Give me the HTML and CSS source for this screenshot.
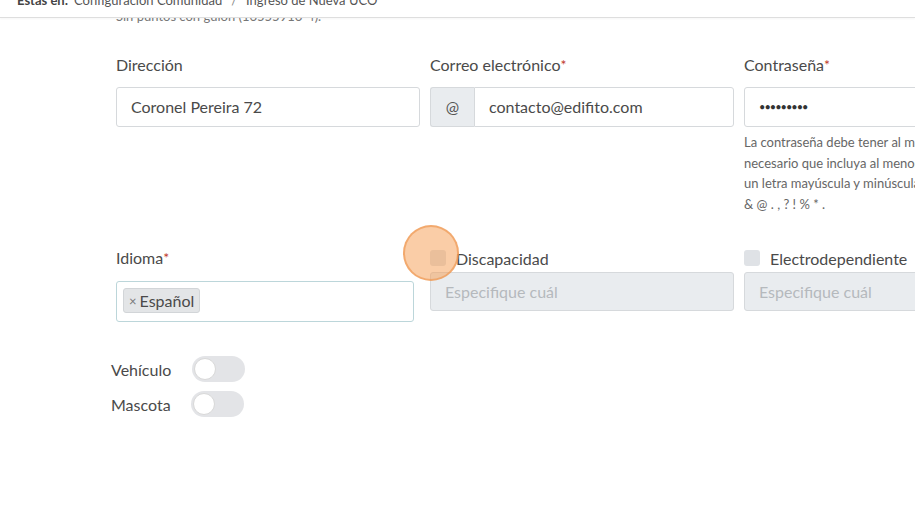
FILE: index.html
```html
<!DOCTYPE html>
<html lang="es">
<head>
  <meta charset="UTF-8" />
  <meta name="viewport" content="width=device-width, initial-scale=1.0" />
  <title>Ingreso de Nueva UCO</title>
  <link rel="stylesheet" href="styles.css">
</head>
<body>
  <div class="topbar">
    <span class="crumb-title">Estas en:</span>
    <span class="crumb">Configuración Comunidad</span>
    <span class="crumb-sep">/</span>
    <span class="crumb">Ingreso de Nueva UCO</span>
  </div>

  <div class="content">
    <div class="prev-help">Sin puntos con guión (16555916-4).</div>

    <!-- fila 1 -->
    <div class="form-row">
      <div class="form-col">
        <label class="form-label">Dirección</label>
        <div class="form-control">Coronel Pereira 72</div>
      </div>
      <div class="form-col">
        <label class="form-label">Correo electrónico<span class="req">*</span></label>
        <div class="input-group">
          <span class="input-prepend">@</span>
          <div class="form-control joined">contacto@edifito.com</div>
        </div>
      </div>
      <div class="form-col">
        <label class="form-label">Contraseña<span class="req">*</span></label>
        <div class="form-control pass">•••••••••</div>
        <p class="help">La contraseña debe tener al mínimo 8 caracteres, es<br>necesario que incluya al menos un número, un símbolo,<br>un letra mayúscula y minúscula. Símbolos: $ # -<br>&amp; @ . , ? ! % * .</p>
      </div>
    </div>

    <!-- fila 2 -->
    <div class="form-row second">
      <div class="form-col">
        <label class="form-label lang">Idioma<span class="req">*</span></label>
        <div class="tag-select">
          <span class="tag"><span class="tag-x">×</span>Español</span>
        </div>
      </div>
      <div class="form-col">
        <div class="check-row">
          <span class="check"></span>
          <span class="check-label">Discapacidad</span>
          <span class="click-mark"></span>
        </div>
        <div class="form-control disabled">Especifique cuál</div>
      </div>
      <div class="form-col">
        <div class="check-row">
          <span class="check"></span>
          <span class="check-label">Electrodependiente</span>
        </div>
        <div class="form-control disabled">Especifique cuál</div>
      </div>
    </div>

    <!-- interruptores -->
    <div class="switches">
      <div class="switch-row">
        <span class="switch-label">Vehículo</span>
        <span class="switch"><span class="knob"></span></span>
      </div>
      <div class="switch-row">
        <span class="switch-label">Mascota</span>
        <span class="switch"><span class="knob"></span></span>
      </div>
    </div>
  </div>
</body>
</html>
```

FILE: styles.css
```css
body {
  margin: 0;
  font-family: 'Lato', 'Open Sans', sans-serif;
  background: #ffffff;
  color: #555;
  width: 915px;
  height: 512px;
  overflow: hidden;
}

/* barra superior */
.topbar {
  position: relative;
  z-index: 2;
  height: 18px;
  background: #fff;
  border-bottom: 1px solid #dedede;
  overflow: hidden;
  display: flex;
  align-items: flex-end;
  gap: 6px;
  padding: 0 0 9px 17px;
  box-sizing: border-box;
  font-size: 13px;
  line-height: 16px;
  color: #555;
  box-shadow: 0 1px 2px rgba(0, 0, 0, 0.04);
}

.crumb-title {
  font-weight: bold;
  color: #444;
}

.crumb-sep {
  color: #888;
  padding: 0 3px;
}

.content {
  padding-left: 116px;
  overflow: hidden;
}

.prev-help {
  font-size: 13px;
  line-height: 16px;
  color: #777;
  margin-top: -10px;
}

/* filas del formulario */
.form-row {
  display: flex;
  gap: 10px;
  width: 1000px;
  margin-top: 29px;
}

.form-row.second {
  margin-top: 32px;
}

.form-col {
  width: 304px;
  flex-shrink: 0;
  position: relative;
}

.form-label {
  display: block;
  font-size: 16px;
  line-height: 24px;
  color: #4a4a4a;
  margin-bottom: 10px;
}

.form-label.lang {
  margin-bottom: 11px;
}

.req {
  color: #c0392b;
  font-size: 14px;
  vertical-align: 1px;
}

.form-control {
  height: 40px;
  box-sizing: border-box;
  border: 1px solid #d6d9dc;
  border-radius: 3px;
  padding: 0 14px;
  font-size: 16px;
  line-height: 38px;
  color: #4a4a4a;
  background: #fff;
}

.form-control.pass {
  font-size: 11px;
  letter-spacing: -1px;
  color: #333;
}

.form-control.disabled {
  background: #e9ecef;
  color: #b5b9bd;
  height: 39px;
  line-height: 37px;
}

.input-group {
  display: flex;
}

.input-prepend {
  width: 44px;
  height: 40px;
  box-sizing: border-box;
  background: #e9ecef;
  border: 1px solid #d6d9dc;
  border-right: none;
  border-radius: 3px 0 0 3px;
  text-align: center;
  line-height: 38px;
  font-size: 16px;
  color: #555;
}

.form-control.joined {
  flex: 1;
  border-radius: 0 3px 3px 0;
}

.help {
  margin: 5px 0 0;
  font-size: 13px;
  line-height: 20.5px;
  color: #666;
  white-space: nowrap;
}

/* idioma */
.tag-select {
  width: 298px;
  height: 41px;
  box-sizing: border-box;
  border: 1px solid #bcd6da;
  border-radius: 3px;
  padding: 6px 6px;
}

.tag {
  display: inline-flex;
  align-items: center;
  height: 25px;
  box-sizing: border-box;
  padding: 0 5px 0 5px;
  background: #e3e5e7;
  border: 1px solid #d2d5d8;
  border-radius: 3px;
  font-size: 16px;
  color: #4a4a4a;
}

.tag-x {
  font-size: 13px;
  color: #777;
  margin-right: 3px;
}

/* casillas */
.check-row {
  display: flex;
  align-items: center;
  gap: 10px;
  height: 24px;
  margin-bottom: 2px;
}

.check {
  width: 16px;
  height: 16px;
  border-radius: 3px;
  background: #dfe2e6;
  flex-shrink: 0;
}

.check-label {
  font-size: 16px;
  color: #4a4a4a;
}

.click-mark {
  position: absolute;
  left: -27px;
  top: -21px;
  width: 56px;
  height: 56px;
  box-sizing: border-box;
  border-radius: 50%;
  background: rgba(245, 155, 80, 0.5);
  border: 2px solid rgba(238, 150, 80, 0.65);
}

/* interruptores */
.switches {
  margin: 34px 0 0 -5px;
  display: flex;
  flex-direction: column;
  gap: 9px;
}

.switch-row {
  display: flex;
  align-items: center;
  gap: 21px;
  font-size: 16px;
  color: #4a4a4a;
}

.switch-row + .switch-row {
  gap: 20px;
}

.switch {
  width: 53px;
  height: 26px;
  border-radius: 13px;
  background: #e3e4e7;
  display: flex;
  align-items: center;
  padding: 0 2px;
  box-sizing: border-box;
}

.knob {
  width: 22px;
  height: 22px;
  border-radius: 50%;
  background: #fff;
  border: 1px solid #d8d8d8;
  box-sizing: border-box;
}
```
